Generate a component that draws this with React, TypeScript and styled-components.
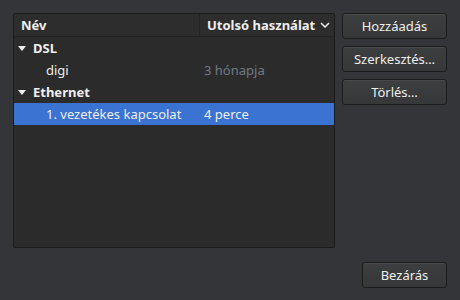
import React from 'react'
import styled, {createGlobalStyle} from 'styled-components'

type Entry = {
  name: string
  used: string
  stale?: boolean
  selected?: boolean
}

type Group = {
  title: string
  entries: Entry[]
}

const GlobalStyle = createGlobalStyle`
  html, body {
    margin: 0;
    padding: 0;
    background: #333538;
  }
  body {
    font-family: 'Noto Sans', 'Open Sans', sans-serif;
    font-size: 13px;
    color: #eeeeec;
  }
`

const Window = styled.div`
  width: 460px;
  height: 300px;
  box-sizing: border-box;
  padding: 13px 13px 12px 13px;
  display: flex;
  flex-direction: column;
  background: #333538;
`

const Main = styled.div`
  display: flex;
  gap: 7px;
`

const TreeBox = styled.div`
  width: 322px;
  height: 235px;
  box-sizing: border-box;
  border: 1px solid #1b1b1b;
  border-radius: 2px;
  background: #2b2b2b;
  display: flex;
  flex-direction: column;
`

const HeaderRow = styled.div`
  display: grid;
  grid-template-columns: 185px 1fr;
  height: 22px;
  background: #2d2d2d;
  border-bottom: 1px solid #232323;
`

const HeaderCell = styled.div<{$divider?: boolean}>`
  display: flex;
  align-items: center;
  gap: 5px;
  padding-left: 7px;
  font-weight: bold;
  color: #eeeeec;
  border-left: ${p => (p.$divider ? '1px solid #242424' : 'none')};
`

const Row = styled.div<{$selected?: boolean}>`
  display: grid;
  grid-template-columns: 190px 1fr;
  height: 22px;
  align-items: center;
  background: ${p => (p.$selected ? '#3b73d3' : 'transparent')};
`

const GroupLabel = styled.div`
  display: flex;
  align-items: center;
  gap: 7px;
  padding-left: 4px;
  font-weight: bold;
`

const Expander = styled.span`
  width: 0;
  height: 0;
  border-left: 4px solid transparent;
  border-right: 4px solid transparent;
  border-top: 5px solid #eeeeec;
`

const NameCell = styled.div`
  padding-left: 32px;
`

const UsedCell = styled.div<{$stale?: boolean}>`
  color: ${p => (p.$stale ? '#707a82' : '#eeeeec')};
`

const ButtonColumn = styled.div`
  display: flex;
  flex-direction: column;
  gap: 7px;
  width: 105px;
`

const Button = styled.button<{$width?: number}>`
  height: 26px;
  width: ${p => (p.$width ? `${p.$width}px` : '100%')};
  box-sizing: border-box;
  border: 1px solid #1c1c1c;
  border-radius: 3px;
  background: linear-gradient(#3d3e40, #363739);
  box-shadow: inset 0 1px 0 rgba(255, 255, 255, 0.06);
  color: #eeeeec;
  font-family: inherit;
  font-size: 13px;
  padding: 0;
`

const Footer = styled.div`
  margin-top: auto;
  display: flex;
  justify-content: flex-end;
`

const groups: Group[] = [
  {title: 'DSL', entries: [{name: 'digi', used: '3 hónapja', stale: true}]},
  {
    title: 'Ethernet',
    entries: [{name: '1. vezetékes kapcsolat', used: '4 perce', selected: true}],
  },
]

const Chevron = () => (
  <svg width="10" height="6" viewBox="0 0 10 6">
    <path d="M1 1 L5 5 L9 1" stroke="#eeeeec" strokeWidth="1.5" fill="none" />
  </svg>
)

const App: React.FC = () => {
  return (
    <>
      <GlobalStyle />
      <Window>
        <Main>
          <TreeBox>
            <HeaderRow>
              <HeaderCell>Név</HeaderCell>
              <HeaderCell $divider>
                Utolsó használat <Chevron />
              </HeaderCell>
            </HeaderRow>
            {groups.map(group => (
              <React.Fragment key={group.title}>
                <Row>
                  <GroupLabel>
                    <Expander />
                    {group.title}
                  </GroupLabel>
                </Row>
                {group.entries.map(entry => (
                  <Row key={entry.name} $selected={entry.selected}>
                    <NameCell>{entry.name}</NameCell>
                    <UsedCell $stale={entry.stale}>{entry.used}</UsedCell>
                  </Row>
                ))}
              </React.Fragment>
            ))}
          </TreeBox>
          <ButtonColumn>
            <Button>Hozzáadás</Button>
            <Button>Szerkesztés…</Button>
            <Button>Törlés…</Button>
          </ButtonColumn>
        </Main>
        <Footer>
          <Button $width={85}>Bezárás</Button>
        </Footer>
      </Window>
    </>
  )
}

export default App
